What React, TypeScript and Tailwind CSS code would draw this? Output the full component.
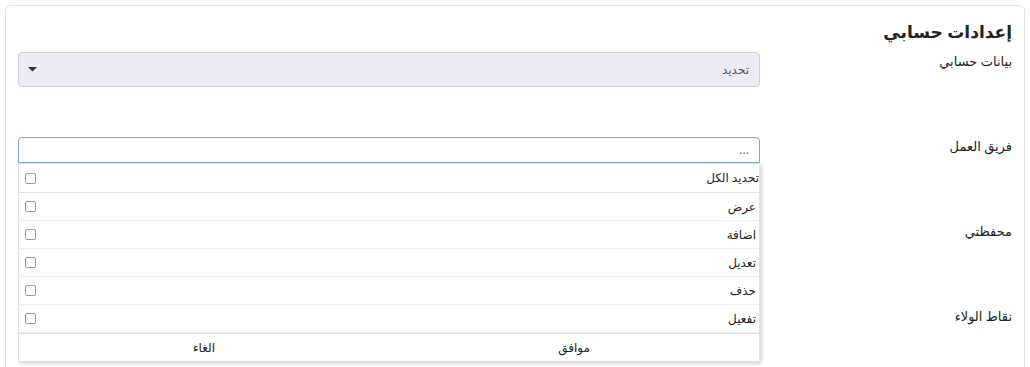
import { useState } from 'react';

const perms = ['عرض', 'اضافة', 'تعديل', 'حذف', 'تفعيل'];

function Box() {
  return <span className="w-[11px] h-[11px] border border-[#9a9a9a] rounded-[2px] bg-white shrink-0" />;
}

export default function App() {
  const [open] = useState(true);

  return (
    <div dir="rtl" className="bg-white h-[367px] overflow-hidden pt-[5px] px-[5px]" style={{ fontFamily: '"Noto Sans", "DejaVu Sans", sans-serif' }}>
      <div className="border border-[#e3e3e3] rounded-md px-[12px] pt-[14px] h-[400px] text-[#222]">
        <h2 className="text-[17px] font-bold leading-[24px] mb-[8px]">إعدادات حسابي</h2>

        <div className="grid grid-cols-[252px_1fr] h-[85px]">
          <div className="text-[13px] leading-[18px]">بيانات حسابي</div>
          <div className="h-[35px] bg-[#eeebf5] border border-[#cfcdd6] rounded-[4px] flex items-center justify-between pr-[10px] pl-[9px]">
            <span className="text-[12px] text-[#555]">تحديد</span>
            <svg width="9" height="5" viewBox="0 0 9 5"><path d="M0 0h9L4.5 4.5z" fill="#333" /></svg>
          </div>
        </div>

        <div className="grid grid-cols-[252px_1fr] h-[85px]">
          <div className="text-[13px] leading-[18px]">فريق العمل</div>
          <div className="relative">
            <div className="h-[26px] border border-[#7ea3de] rounded-t-[4px] flex items-center px-[10px] text-[12px] text-[#777]">...</div>
            {open && (
              <div className="absolute top-[26px] inset-x-0 z-10 bg-white border border-[#e2e2e2] shadow-[2px_2px_3px_rgba(0,0,0,0.15)]">
                <div className="h-[29px] flex items-center justify-between border-b border-[#e3e3e3] pl-[6px] text-[12px]">
                  <span>تحديد الكل</span>
                  <Box />
                </div>
                {perms.map(p => (
                  <div key={p} className="h-[28px] flex items-center justify-between border-b border-[#f0f0f0] pr-[3px] pl-[6px] text-[12px]">
                    <span>{p}</span>
                    <Box />
                  </div>
                ))}
                <div className="grid grid-cols-2 h-[28px] border-t border-[#dcdcdc] text-[12px]">
                  <button className="flex items-center justify-center">موافق</button>
                  <button className="flex items-center justify-center">الغاء</button>
                </div>
              </div>
            )}
          </div>
        </div>

        <div className="grid grid-cols-[252px_1fr] h-[85px]">
          <div className="text-[13px] leading-[18px]">محفظتي</div>
          <div />
        </div>

        <div className="grid grid-cols-[252px_1fr] h-[85px]">
          <div className="text-[13px] leading-[18px]">نقاط الولاء</div>
          <div />
        </div>
      </div>
    </div>
  );
}
